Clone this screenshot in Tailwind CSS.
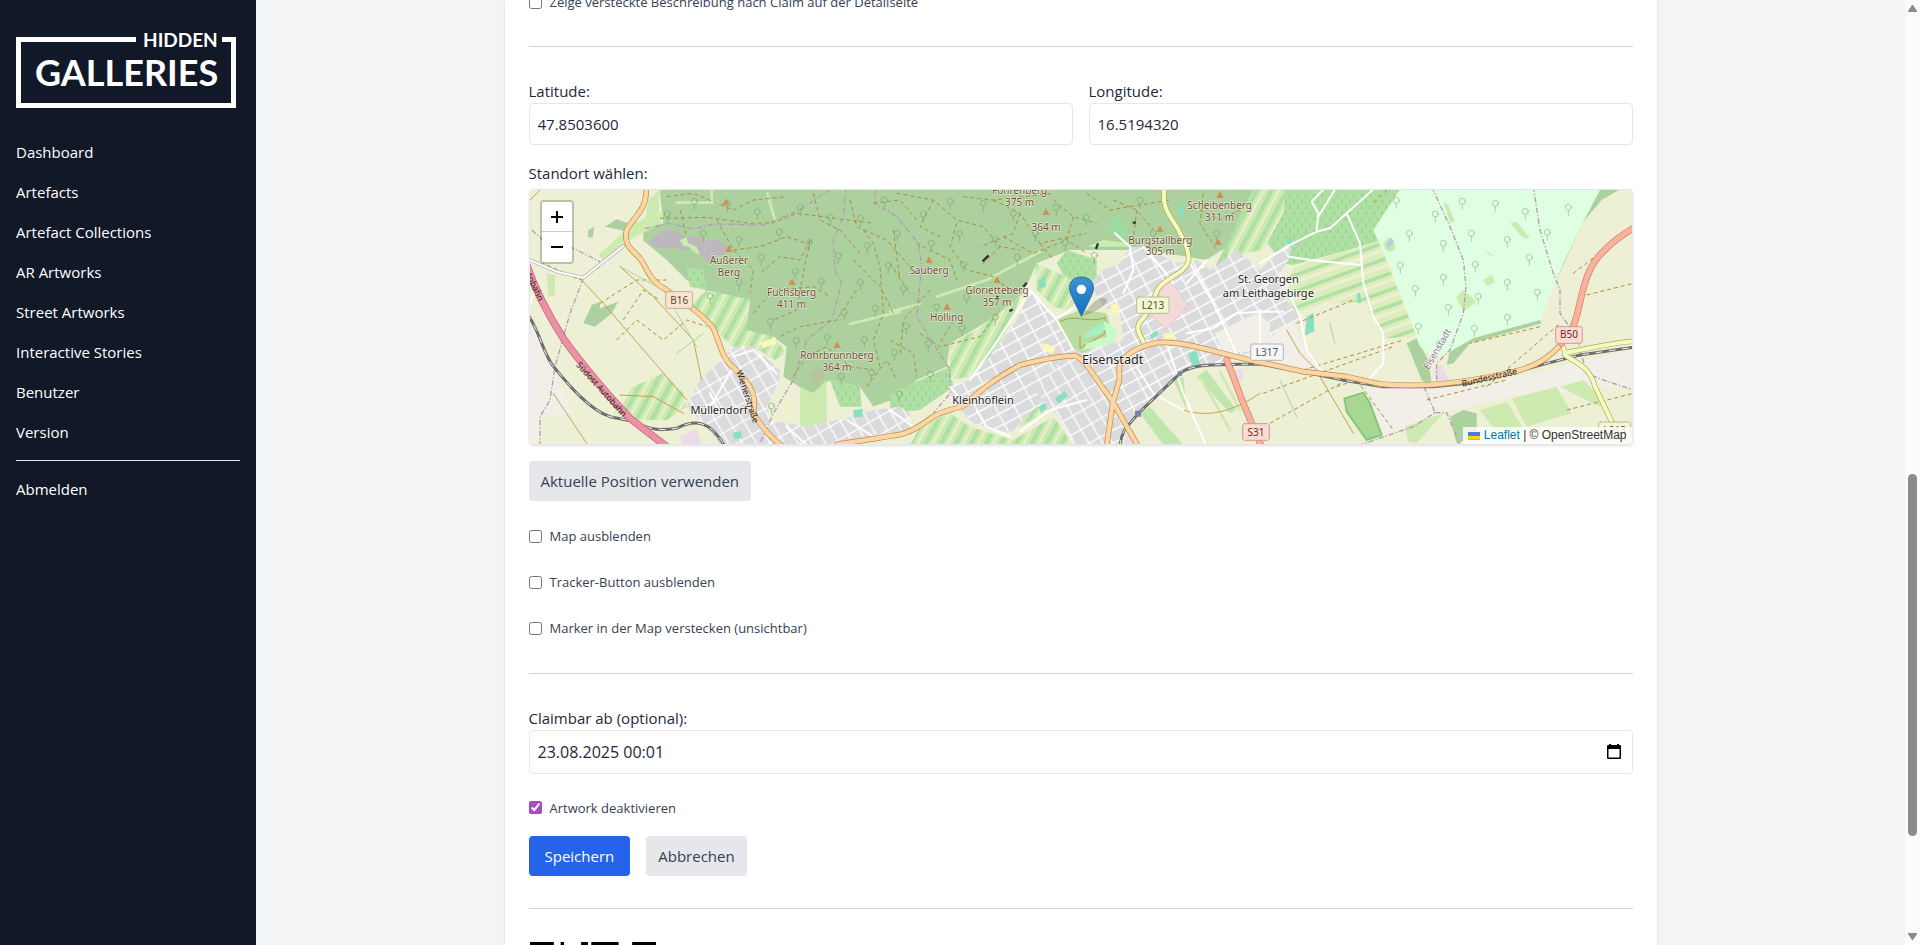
<!DOCTYPE html>
<html lang="de">
<head>
    <meta charset="UTF-8" />
    <meta name="viewport" content="width=device-width, initial-scale=1.0"/>
    <title>Hidden Galleries – Artwork bearbeiten</title>
    <script src="https://cdn.jsdelivr.net/npm/@tailwindcss/browser@4"></script>
</head>
<body class="flex h-screen overflow-hidden bg-gray-100 font-['Open_Sans',sans-serif] text-[15px] leading-6 text-gray-800">

    <!-- Seitenleiste -->
    <aside class="w-64 shrink-0 bg-[#111827] p-4 text-white">
        <a href="#" class="mt-4 mb-8 block" aria-label="Hidden Galleries">
            <svg class="block h-[76px] w-[220px]" viewBox="0 0 220 76" fill="none">
                <path d="M120 7.500H2.500V73.500H217.500V7.500H206" stroke="#fff" stroke-width="5"/>
                <text x="127" y="15" fill="#fff" font-family="Lato, sans-serif" font-weight="700" font-size="19">HIDDEN</text>
                <text x="19" y="54" fill="#fff" font-family="Lato, sans-serif" font-weight="700" font-size="36">GALLERIES</text>
            </svg>
        </a>
        <nav class="flex flex-col gap-4">
            <a href="#">Dashboard</a>
            <a href="#">Artefacts</a>
            <a href="#">Artefact Collections</a>
            <a href="#">AR Artworks</a>
            <a href="#">Street Artworks</a>
            <a href="#">Interactive Stories</a>
            <a href="#">Benutzer</a>
            <a href="#">Version</a>
            <hr class="border-gray-200">
            <a href="#">Abmelden</a>
        </nav>
    </aside>

    <main class="flex min-w-0 flex-1 justify-center overflow-hidden">
        <form class="w-full max-w-6xl shrink-0 bg-white px-6 shadow-sm">
            <div class="-mt-[10px] flex h-6 items-center gap-2 text-[13px] text-gray-700">
                <input type="checkbox" id="show-hidden" class="size-[13px]">
                <label for="show-hidden">Zeige versteckte Beschreibung nach Claim auf der Detailseite</label>
            </div>

            <hr class="my-8 border-gray-300">

            <div class="grid grid-cols-2 gap-4">
                <div>
                    <label for="lat" class="block">Latitude:</label>
                    <input type="text" id="lat" value="47.8503600" class="block h-[42px] w-full rounded border border-gray-200 px-2">
                </div>
                <div>
                    <label for="lng" class="block">Longitude:</label>
                    <input type="text" id="lng" value="16.5194320" class="block h-[42px] w-full rounded border border-gray-200 px-2">
                </div>
            </div>

            <p class="mt-4 mb-1">Standort wählen:</p>
            <div class="relative h-64 overflow-hidden rounded border border-gray-200 shadow">
                <svg class="block size-full" viewBox="30 30 3306 762" preserveAspectRatio="xMidYMid slice" fill="none" stroke-linecap="round" stroke-linejoin="round">
                    <defs>
                        <pattern id="streets-a" width="52" height="34" patternUnits="userSpaceOnUse" patternTransform="rotate(-28)">
                            <rect width="52" height="34" fill="#dbdadc"/><path d="M0 2H52M3 0V34" stroke="#fff" stroke-width="4"/>
                        </pattern>
                        <pattern id="streets-b" width="36" height="48" patternUnits="userSpaceOnUse" patternTransform="rotate(-30)">
                            <rect width="36" height="48" fill="#dbdadc"/><path d="M0 2H36M3 0V48" stroke="#fff" stroke-width="4"/>
                        </pattern>
                        <pattern id="vines" width="40" height="60" patternUnits="userSpaceOnUse" patternTransform="rotate(28)">
                            <rect width="40" height="60" fill="#cdebb0"/><path d="M6 0V60" stroke="#aedfa3" stroke-width="13"/><path d="M25 0V60" stroke="#eef0d5" stroke-width="6"/>
                        </pattern>
                        <pattern id="vines-flat" width="60" height="46" patternUnits="userSpaceOnUse" patternTransform="rotate(-20)">
                            <rect width="60" height="46" fill="#dcedbd"/><path d="M0 6H60" stroke="#aedfa3" stroke-width="10"/><path d="M0 26H60" stroke="#f0efd5" stroke-width="9"/>
                        </pattern>
                        <pattern id="orchard" width="24" height="36" patternUnits="userSpaceOnUse">
                            <rect width="24" height="36" fill="#aedfa3"/><path d="M6 6v8M18 24v8" stroke="#84bd7d" stroke-width="2"/>
                        </pattern>
                        <linearGradient id="pin" x1="0" y1="0" x2="0" y2="1">
                            <stop offset="0" stop-color="#3f93cf"/><stop offset="1" stop-color="#126fc6"/>
                        </linearGradient>
                        <g id="tree"><circle r="9"/><path d="M0 9V24"/></g>
                        <path id="peak" d="M0 -11L11 9H-11Z" fill="#d08f55"/>

                        <path id="motorway" d="M20 255C50 340 85 405 130 475C190 560 260 640 330 715L440 800"/>
                        <path id="trunk" d="M3340 145C3270 185 3225 235 3210 270C3180 330 3180 400 3155 450L3125 490M2120 540L2140 590L2170 670L2225 800"/>
                        <path id="primary" d="M378 20C384 90 340 110 320 150C308 200 345 215 362 238C385 270 385 300 440 330C500 370 555 410 580 445C600 490 608 540 640 562C700 620 710 650 700 700C730 750 760 780 790 800M950 793L1050 778L1110 768C1160 765 1190 745 1240 710C1270 690 1300 690 1335 675C1380 630 1420 600 1500 555C1560 540 1620 528 1665 527C1700 540 1720 590 1775 660L1855 800M1760 800L1778 670L1798 600V560C1805 530 1850 500 1910 488C2000 480 2100 525 2250 553L2350 575L2480 590L2580 612C2680 622 2800 618 2980 575C3050 560 3090 530 3125 490"/>
                        <path id="secondary" d="M1935 20C1920 80 1955 115 1970 140C1990 180 2010 210 2005 245C1990 285 1940 290 1915 325C1900 350 1900 380 1865 420C1840 445 1865 470 1872 490M3340 484C3270 488 3200 508 3135 518L3125 490M3135 525C3170 550 3210 560 3225 620L3275 725L3320 800"/>
                        <path id="rail" d="M20 400C60 450 70 530 105 565C150 620 210 690 270 710L330 722C400 755 430 750 470 745C530 715 570 725 612 795M1800 800C1805 740 1830 735 1855 700L1980 580C2020 550 2080 555 2220 552L2370 580L2480 602L2590 620H2740L2840 610L2980 578L3080 550L3180 525L3340 502"/>
                    </defs>

                    <!-- Flächen -->
                    <path d="M0 0H3360V800H0Z" fill="#eef0d5"/>
                    <path d="M27 410L160 700L60 712L55 800H0V410ZM2180 460L2310 400L2360 520L2400 575L2180 530ZM2540 625L2860 620L3340 510V620L2970 650L2760 700L2560 780L2490 720Z" fill="#f2efe9"/>
                    <path d="M418 20L430 130L370 150V182L440 240L500 300L560 332L690 360L675 450L760 470L800 500L790 590L840 622L880 640L930 600L1020 620L1060 680L1140 650L1190 600L1280 560L1290 490L1360 450L1440 400L1510 340L1550 250L1650 210H1810L1910 215L2060 240L2120 200L2190 120L2260 90L2360 20Z" fill="#add19e"/>
                    <path d="M190 430L215 375L240 365V385L295 365L275 400L225 440ZM255 140L290 118L340 135L312 152ZM205 150L222 140L218 175L203 170ZM2660 490L2690 475L2725 540L2735 615L2705 600ZM2790 510L2860 470L3060 418L3065 430L2850 490L2800 550L2780 555ZM3100 320L3190 125L3245 60L3300 28H3240L3190 110L3125 260ZM2790 710L2830 690L2870 700V770L2810 790Z" fill="#add19e"/>
                    <path d="M235 225L340 130L425 95V130L310 190L250 240ZM385 60L418 30V95L375 125ZM2880 690L2960 665L3010 745L2940 770ZM2975 655L3110 620L3155 700L3020 740ZM2655 740L2770 700L2690 790L2665 785ZM3120 620L3190 600L3260 670L3240 680ZM80 280L105 285V345L85 350Z" fill="#cdebb0"/>
                    <path d="M2473 655L2530 638L2550 670L2585 765L2540 780L2480 695Z" fill="#a7d793" stroke="#84c67a" stroke-width="6"/>
                    <path d="M2645 20L2560 150L2620 280L2700 500L2740 530L2790 515L2860 475L3060 420L3125 260L3190 125L3245 20Z" fill="#dfffe2"/>
                    <path d="M2770 65L2785 75L2805 125L2790 128ZM2970 130L2990 125L3030 175H3010ZM2888 205L2925 230L2910 225ZM2890 300L2915 285L2925 305L2900 318ZM2808 350L2830 330L2870 365L2830 395Z" fill="#cdebb0"/>
                    <path d="M2590 190C2610 160 2620 180 2628 205C2610 225 2592 215 2590 190Z" fill="#cdebb0"/><path d="M2598 195L2612 172L2622 185L2605 208Z" fill="#aad3df"/>
                    <path d="M2205 20H2645L2560 150L2575 185L2320 255L2290 250L2210 150L2120 240L2080 270L2150 130L2200 110Z" fill="url(#orchard)"/>
                    <path d="M2205 20H2300L2290 100L2230 210L2120 230L2150 130Z" fill="url(#vines)"/>
                    <path d="M2320 260L2575 182L2690 470L2590 475L2535 365L2430 370L2325 400L2285 360Z" fill="url(#vines-flat)"/>
                    <path d="M560 330L690 360L680 450L760 470L800 520L765 540L700 500L640 500L560 430L510 380Z" fill="url(#vines)"/>
                    <path d="M500 260L550 270L560 330L510 320ZM930 600L1020 620L1025 680L960 680ZM1200 600L1290 560L1300 620L1200 690L1110 700V640ZM1640 210L1730 240V310L1640 300L1610 250Z" fill="url(#orchard)"/>
                    <path d="M280 700L340 620L430 580L490 640L500 680L440 720H360Z" fill="url(#vines)"/>
                    <path d="M1545 250L1640 290L1700 340L1640 390L1600 380L1550 330ZM1370 450L1500 350L1480 420L1420 520L1350 590L1290 600L1290 490ZM1170 795L1200 740L1290 700L1350 740L1480 780L1600 710L1660 795ZM1480 680L1530 650L1570 700L1500 740Z" fill="url(#vines)"/>
                    <path d="M840 622L880 640L920 600V770L840 740Z" fill="#cdebb0"/>
                    <path d="M2030 590L2060 570L2150 690L2130 700ZM1860 700L1930 795H1990L1890 680ZM1960 600L1990 590L2000 690Z" fill="#c0e6ae"/>
                    <path d="M385 185L430 150L470 152L500 172L520 165L560 182L590 178L625 200L615 225L600 222L580 240L560 245L530 215L510 205L490 212L470 205L410 205Z" fill="#bdb7be"/>
                    <path d="M480 180L500 172L505 190L530 200L540 225L520 215L508 200L490 198Z" fill="#cdebb0"/>
                    <path d="M870 580L900 560L915 590L890 620L870 605Z" fill="#b5c79a"/>
                    <path d="M780 700L800 655L838 670L800 720Z" fill="#f3f0cf"/>

                    <!-- Ortsgebiete -->
                    <path d="M645 500H700L780 570L778 600L740 680L750 720L860 740L950 720L1060 690L1140 680L1170 700V750L1110 775L1000 795H600L560 740L500 680L540 600Z" fill="url(#streets-b)"/>
                    <path d="M1290 620L1350 600L1410 530L1490 420L1530 335L1580 380L1610 420L1650 500L1710 510L1810 480L1800 400L1750 380L1710 310L1750 270L1800 250L1830 200L1870 200L1970 250L2030 240L2070 270L2150 210L2220 270L2280 210L2320 180L2310 230L2280 280L2290 350L2350 420L2280 440L2230 500L2130 540L1980 580L1850 700L1800 795H1660L1610 700L1550 680L1470 760L1360 730L1290 660Z" fill="url(#streets-a)"/>
                    <path d="M1630 530H1670L1780 660L1760 795H1670L1600 690L1550 640Z" fill="url(#streets-b)"/>
                    <path d="M2085 460L2210 400L2250 430V510L2110 520Z" fill="#f2efe9"/>
                    <path d="M1920 330L1950 300L2005 375L1940 448L1895 410Z" fill="#f2dad9" stroke="#e7bcbf" stroke-width="2"/>
                    <path d="M1605 420L1680 390L1760 400L1780 470L1690 520L1650 500Z" fill="#b9dca0"/>
                    <path d="M1620 425C1660 400 1700 430 1750 415M1680 470V505L1755 460V410" stroke="#b39a55" stroke-width="3"/>
                    <path d="M1690 465L1740 430L1765 440L1740 462L1695 475Z" fill="#a9efc4"/>
                    <path d="M1750 420L1790 450L1780 490L1690 510L1700 490L1760 470Z" fill="#c8facc"/>
                    <path d="M1555 300l18-10l6 30l-20 6ZM1605 655l30-22l8 16l-28 22ZM1555 682l18-14l8 18l-18 12ZM2300 182l10-12l12 22l-12 12ZM2360 410l20-12l3 55l-28 14ZM2510 340l10-2l4 30l-10 2ZM1000 690l28-4v24l-26 2ZM640 758l22-6l4 22l-24 4ZM1975 85L1990 70L1992 110L1976 105ZM1890 465l18-14l8 12l-20 14ZM2005 520l24-6l12 40l-24 6Z" fill="#88e0be"/>
                    <path d="M1565 490l24 4l18 14l-10 14l-24-10ZM1770 375l24-6l2 32l-22 4ZM1930 460l30-2v20l-28 2ZM720 490L765 470L770 490L730 505Z" fill="#f9f9b5"/>
                    <path d="M480 770L530 745L545 795H490ZM2740 570L2762 552L2788 600L2755 612ZM2145 570l20-4l6 34l-16 2ZM1820 760l20-10l20 45h-45Z" fill="#ebdbe8"/>
                    <path d="M1750 150L1800 95L1830 170L1790 170Z" fill="#9fdba0"/>
                    <g stroke="#cdebb0" stroke-width="8"><path d="M470 68H590M575 32V66M742 40L765 120M990 432L1140 395M1110 395L1200 372M1250 350L1400 300L1560 215"/><path d="M2040 590L2130 750M2100 575L2160 690"/></g>
                    <path d="M1700 200L1750 180L1830 190L1820 200Z" fill="#cdebb0"/>

                    <!-- Grenzen und Wege -->
                    <g stroke="#b39cb2" stroke-width="4" stroke-dasharray="16 6 4 6" stroke-linecap="butt">
                        <path d="M375 145L450 130L520 148L580 132L730 135L830 95L930 30M978 20L970 110L940 180L945 270L965 310L935 420L860 480L820 600L760 700L720 790M1065 30V70L1130 110L1195 190L1205 260L1190 410L1240 490L1290 570V640L1240 700M35 150L80 190L150 200L240 245M190 295L150 400L105 560L90 660L60 710V800"/>
                        <path d="M2735 20L2790 140L2830 240L2838 320L2830 400L2790 510L2750 550V610M3040 20L3060 150L3100 280L3120 330V400L3170 470L3200 580L3250 600L3340 630M2712 620L2745 698L2680 740L2520 795M2745 698H2780L2820 795"/>
                    </g>
                    <g stroke="#ae8c3e" stroke-width="3" stroke-dasharray="12 9" stroke-linecap="butt">
                        <path d="M420 115L560 112L690 130L760 128L830 100L1060 130M590 120L640 210L700 270L690 340M870 180L840 240L780 230L720 280M870 180L850 280L830 390L760 420M1030 150L1060 190L1080 260L1090 400L1060 480L1080 560M1000 240L1080 320L1120 400M820 590L860 530L920 500L990 560L1060 570M1010 330L950 420L840 440L780 470M1120 150L1140 300M880 40L900 120L960 150L1020 220"/>
                        <path d="M1130 40L1240 60L1310 120L1390 140L1440 200L1500 210M1310 130L1290 200L1340 270L1420 290L1480 340M1190 190L1290 240L1310 300M1420 60L1500 100L1560 190L1700 160M1450 170L1540 220L1640 180M1200 460L1260 500L1380 470L1440 390M1300 420L1260 490M1600 60L1660 110L1730 130M1780 60L1850 90L1900 150M1700 40L1770 90L1950 60M2020 80L2100 120L2160 90M1230 330L1150 420L1140 530M1330 50L1420 60L1600 40"/>
                        <path d="M440 50L520 40L640 90L700 60L800 50M480 90L500 170M640 210L720 200L800 170L860 190M700 400L760 330L880 320L930 350M990 60L1010 140L1100 180L1170 260M1040 620L1100 540L1130 600M1060 70L1140 60L1190 120M1240 60L1200 140L1260 170M1500 100L1480 160L1380 200M1560 190L1600 240M1660 110L1640 180L1700 220M1440 200L1380 260M1110 480L1180 520L1190 590M1110 250L1170 340M1850 90L1840 180M2050 40L2040 130L2090 210"/>
                        <path d="M240 260L180 300L70 250M310 420L370 330L420 360M290 480L350 420L430 480L500 420L560 440M240 370L350 300L440 300M2600 30L2560 70M2330 430L2500 360M2350 570L2650 480M2230 640L2620 500M2250 730L2480 600M3160 280L3340 140M3180 350L3340 310M3060 440L2850 490M2900 620L3120 430M2720 660L2960 600M3140 690L3340 640M2450 620L2510 600L2620 750"/>
                    </g>
                    <g stroke="#c5a24f" stroke-width="3">
                        <path d="M185 300L250 370L500 660M30 60L60 30M300 260L400 350L520 480L545 600M100 640L200 790M300 645L400 650L490 700M1990 690C2080 720 2160 680 2220 640M2300 450L2340 520L2390 570M2400 590L2500 760"/>
                    </g>
                    <g stroke="#a9d6a4" stroke-width="3"><path d="M300 260L430 330L530 500M470 520L550 460M2280 600L2330 710M2430 430L2445 490"/></g>

                    <!-- Nebenstraßen -->
                    <g stroke="#b9b5b5" stroke-width="11"><path d="M20 236L110 275L190 293L310 198"/></g>
                    <g stroke="#fff" stroke-width="6">
                        <path d="M20 236L110 275L190 293L310 198M27 380L40 340"/>
                        <path d="M1350 600L1420 500L1530 335M1530 330L1610 420L1660 510M1610 415L1660 385M1785 160L1830 200L1840 270L1810 340M1870 200L1930 270L1960 310M2060 240L2000 310M2000 460L2080 445L2150 400L2220 395H2290M1870 480L1920 490L1950 500M1940 490L1990 640L2060 800M1850 560L1900 640L1990 690M1500 755L1590 690L1700 660M1370 690L1400 740L1470 770M1340 680L1290 620"/>
                        <path d="M2010 250L2080 370L2150 520M2220 390V500M2220 250L2300 200L2390 155L2430 145L2480 100L2560 28M2480 100L2520 190L2530 310L2560 410L2590 460V550L2545 600M2310 230L2370 240L2520 255M2280 280L2340 410L2360 510L2405 575M2390 150L2395 100L2375 65L2410 28M2395 110L2445 28"/>
                        <path d="M560 700L640 560M600 700L570 640M1110 690L1180 740M800 740L860 795M980 720L1060 770M640 530L700 510L770 580"/>
                    </g>

                    <!-- Hauptstraßen und Bahn -->
                    <use href="#rail" stroke="#6d6d6d" stroke-width="9"/><use href="#rail" stroke="#f3f3f3" stroke-width="3" stroke-dasharray="20 20" stroke-linecap="butt"/>
                    <use href="#secondary" stroke="#a5a958" stroke-width="16"/><use href="#secondary" stroke="#f7fabf" stroke-width="12"/>
                    <use href="#primary" stroke="#bd8a42" stroke-width="17"/><use href="#primary" stroke="#fcd6a4" stroke-width="13"/>
                    <use href="#trunk" stroke="#d07861" stroke-width="20"/><use href="#trunk" stroke="#f9b29c" stroke-width="16"/>
                    <use href="#motorway" stroke="#d5557c" stroke-width="22"/><use href="#motorway" stroke="#e892a2" stroke-width="18"/>
                    <path d="M1845 692h18v18h-18ZM1973 574h13v13h-13Z" fill="#7981b0"/>
                    <path d="M1388 244L1406 226M1728 207L1734 190M1510 320L1520 308M1468 393L1478 389M1838 128h10M1428 358L1434 348" stroke="#333" stroke-width="7" stroke-linecap="butt"/>

                    <g id="forest-trees" stroke="#7ba777" stroke-width="2"></g>
                    <g id="park-trees" stroke="#93b595" stroke-width="2"></g>

                    <!-- Gipfel -->
                    <use href="#peak" x="618" y="66"/><use href="#peak" x="627" y="207"/><use href="#peak" x="816" y="306"/><use href="#peak" x="951" y="495"/>
                    <use href="#peak" x="1227" y="240"/><use href="#peak" x="1281" y="381"/><use href="#peak" x="1431" y="300"/><use href="#peak" x="1578" y="96"/>
                    <use href="#peak" x="1920" y="147"/><use href="#peak" x="2100" y="45"/><use href="#peak" x="2094" y="186"/>

                    <g font-family="'Noto Sans', 'Open Sans', sans-serif" text-anchor="middle" stroke="none">
                        <g font-size="30" fill="#774b32" stroke="#ffffff" stroke-opacity=".65" stroke-width="4" paint-order="stroke">
                            <text x="627" y="252">Äußerer</text><text x="627" y="287">Berg</text>
                            <text x="815" y="349">Fuchsberg</text><text x="815" y="384">411 m</text>
                            <text x="951" y="538">Rohrbrunnberg</text><text x="951" y="573">364 m</text>
                            <text x="1227" y="282">Sauberg</text><text x="1280" y="423">Hölling</text>
                            <text x="1431" y="342">Glorietteberg</text><text x="1431" y="377">357 m</text>
                            <text x="1499" y="43">Föhrenberg</text><text x="1499" y="78">375 m</text>
                            <text x="1578" y="152">364 m</text>
                            <text x="1921" y="191">Burgstallberg</text><text x="1921" y="226">305 m</text>
                            <text x="2099" y="87">Scheibenberg</text><text x="2099" y="122">311 m</text>
                        </g>
                        <g fill="#222" stroke="#fff" stroke-opacity=".8" stroke-width="5" paint-order="stroke">
                            <text x="597" y="701" font-size="33">Müllendorf</text>
                            <text x="1389" y="673" font-size="33">Kleinhöflein</text>
                            <text x="1778" y="553" font-size="38">Eisenstadt</text>
                            <text x="2245" y="309" font-size="33">St. Georgen</text>
                            <text x="2245" y="352" font-size="33">am Leithagebirge</text>
                        </g>
                        <g fill="#222" font-size="26">
                            <text transform="translate(238 634) rotate(48)">Südost Autobahn</text>
                            <text transform="translate(37 325) rotate(65)">tobahn</text>
                            <text transform="translate(674 652) rotate(72)">Wienerstraße</text>
                            <text transform="translate(2910 601) rotate(-13)">Bundesstraße</text>
                        </g>
                        <text transform="translate(2760 512) rotate(-60)" font-size="28" fill="#93759a" stroke="#fff" stroke-opacity=".7" stroke-width="4" paint-order="stroke">Eisenstadt</text>
                    </g>

                    <!-- Straßenschilder -->
                    <g font-family="'Noto Sans', 'Open Sans', sans-serif" font-size="30" text-anchor="middle" stroke-width="3">
                        <rect x="437" y="335" width="81" height="50" rx="6" fill="#f7e5d3" stroke="#cfa98b"/><text x="478" y="371" fill="#6b4423">B16</text>
                        <rect x="1850" y="351" width="97" height="49" rx="6" fill="#f4f5d4" stroke="#b9bd8e"/><text x="1899" y="387" fill="#50521e">L213</text>
                        <rect x="2192" y="492" width="98" height="49" rx="6" fill="#f6f6f6" stroke="#b4b4b4"/><text x="2241" y="527" fill="#555">L317</text>
                        <rect x="2168" y="731" width="80" height="50" rx="6" fill="#f9dcd5" stroke="#d29a90"/><text x="2208" y="767" fill="#6b2b23">S31</text>
                        <rect x="3107" y="440" width="80" height="50" rx="6" fill="#f9dcd5" stroke="#d29a90"/><text x="3147" y="475" fill="#6b2b23">B50</text>
                        <rect x="3236" y="726" width="96" height="49" rx="6" fill="#f4f5d4" stroke="#b9bd8e"/><text x="3284" y="761" fill="#50521e">L213</text>
                    </g>

                    <!-- Marker -->
                    <path d="M1690 408C1710 375 1730 350 1755 355C1775 362 1745 390 1690 408Z" fill="#000" fill-opacity=".18"/>
                    <path d="M1684 408L1657 352C1640 320 1650 292 1684 291C1718 292 1730 320 1712 352Z" fill="url(#pin)" stroke="#2e6c97" stroke-width="3"/>
                    <circle cx="1684" cy="328" r="14" fill="#fff"/>
                </svg>

                <div class="absolute top-[10px] left-[10px] flex flex-col rounded border-2 border-black/20 bg-clip-padding">
                    <button type="button" aria-label="Zoom in" class="flex h-[30px] w-[30px] items-center justify-center rounded-t-xs border-b border-[#ccc] bg-white">
                        <svg class="size-3" viewBox="0 0 12 12" stroke="#000" stroke-width="2"><path d="M0 6H12M6 0V12"/></svg>
                    </button>
                    <button type="button" aria-label="Zoom out" class="flex h-[30px] w-[30px] items-center justify-center rounded-b-xs bg-white">
                        <svg class="size-3" viewBox="0 0 12 12" stroke="#000" stroke-width="2"><path d="M0 6H12"/></svg>
                    </button>
                </div>

                <div class="absolute right-0 bottom-0 flex items-center gap-1 bg-white/80 px-[5px] font-['Liberation_Sans',sans-serif] text-xs leading-[17px] text-[#333]">
                    <svg class="h-2 w-3" viewBox="0 0 12 8"><path fill="#4c7be1" d="M0 0h12v4H0z"/><path fill="#ffd500" d="M0 4h12v3H0z"/><path fill="#e0bc00" d="M0 7h12v1H0z"/></svg>
                    <p><a href="#" class="text-[#0078a8]">Leaflet</a> | © OpenStreetMap</p>
                </div>
            </div>

            <button type="button" class="mt-4 block h-10 rounded bg-gray-200 px-3 text-gray-700">Aktuelle Position verwenden</button>

            <div class="mt-6 flex flex-col gap-6 pb-[2px] text-[13px] leading-[22px] text-gray-700">
                <div class="flex items-center gap-2">
                    <input type="checkbox" id="hide-map" class="size-[13px]">
                    <label for="hide-map">Map ausblenden</label>
                </div>
                <div class="flex items-center gap-2">
                    <input type="checkbox" id="hide-tracker" class="size-[13px]">
                    <label for="hide-tracker">Tracker-Button ausblenden</label>
                </div>
                <div class="flex items-center gap-2">
                    <input type="checkbox" id="hide-marker" class="size-[13px]">
                    <label for="hide-marker">Marker in der Map verstecken (unsichtbar)</label>
                </div>
            </div>

            <hr class="my-8 border-gray-300">

            <label for="claim-from" class="block">Claimbar ab (optional):</label>
            <div class="flex h-11 items-center rounded border border-gray-200 px-2">
                <input type="text" id="claim-from" value="23.08.2025 00:01" class="min-w-0 flex-1 text-base">
                <button type="button" aria-label="Datum wählen" class="px-[3px]">
                    <svg class="block h-4 w-[14px]" viewBox="0 0 14 16"><path fill-rule="evenodd" d="M2 0h2v1h6V0h2v1h1q1 0 1 1v12q0 1-1 1H1q-1 0-1-1V2q0-1 1-1h1zM1.500 5v8.500h11V5z"/></svg>
                </button>
            </div>

            <div class="mt-[22px] flex h-[23px] items-center gap-2 text-[13px] text-gray-700">
                <input type="checkbox" id="deactivate" checked class="size-[13px] accent-[#a84ac0]">
                <label for="deactivate">Artwork deaktivieren</label>
            </div>

            <div class="mt-[17px] flex gap-4">
                <button type="submit" class="h-10 rounded bg-[#2563eb] px-4 text-white">Speichern</button>
                <button type="button" class="h-10 rounded bg-gray-200 px-3 text-gray-700">Abbrechen</button>
            </div>

            <hr class="my-8 border-gray-300">

            <!-- QR-Code -->
            <svg class="block size-32 p-px" viewBox="0 0 37 37">
                <path d="M0 0h7v7H0zM30 0h7v7h-7zM0 30h7v7H0z"/>
                <path fill="#fff" d="M1 1h5v5H1zM31 1h5v5h-5zM1 31h5v5H1z"/>
                <path d="M2 2h3v3H2zM32 2h3v3h-3zM2 32h3v3H2zM9 0h1v2H9zM15 0h2v1h-2zM18 0h8v1h-8zM11 2h3v1h-3zM20 2h4v2h-4zM9 5h2v4H9zM14 6h5v1h-5zM24 5h2v5h-2z"/>
            </svg>
        </form>
    </main>

    <!-- Scrollleiste -->
    <div class="flex w-[15px] shrink-0 flex-col items-center bg-[#fcfcfc] py-[5px]">
        <svg class="h-[7px] w-[9px]" viewBox="0 0 9 7"><path fill="#8b8b8b" d="M4 0h1l4 6v1H0V6z"/></svg>
        <div class="min-h-0 w-full flex-[462]"></div>
        <div class="w-[9px] min-h-0 flex-[362] rounded-full bg-[#8b8b8b]"></div>
        <div class="min-h-0 w-full flex-[97]"></div>
        <svg class="h-[7px] w-[9px]" viewBox="0 0 9 7"><path fill="#8b8b8b" d="M4 7h1l4-6V0H0v1z"/></svg>
    </div>

    <script>
        // Baumsymbole auf der Karte
        const forest = [[523,64],[442,102],[550,160],[622,72],[712,95],[841,82],[931,112],[1021,115],[1093,60],[657,178],[778,156],[868,186],[955,226],[1042,196],[724,232],[826,273],[904,303],[1021,307],[1105,256],[973,397],[1066,385],[751,424],[829,481],[922,471],[1033,478],[1123,517],[1054,577],[964,589],[754,678],[657,307],[571,348],[1132,160],[1291,64],[1210,103],[1318,160],[1390,70],[1480,100],[1609,82],[1699,112],[1546,160],[1636,187],[1426,178],[1330,253],[1492,232],[1234,190],[1151,325],[1250,381],[1340,350],[1159,438],[1327,444],[1225,490],[1231,582],[1138,642],[1426,411],[1861,61],[1900,160],[1723,226],[2090,160]];
        const park = [[2629,61],[2827,64],[2926,70],[3016,94],[3145,82],[2746,102],[2668,160],[2854,160],[3082,157],[2770,190],[2962,178],[3028,232],[2641,256],[2866,253],[2770,292],[2962,307],[2686,325],[3052,337],[2875,349],[2785,382],[2962,412],[2695,439],[2863,445],[2758,490]];
        const draw = (id, points) => {
            document.getElementById(id).innerHTML = points.map(([x, y]) => `<use href="#tree" x="${x}" y="${y}"/>`).join('');
        };
        draw('forest-trees', forest);
        draw('park-trees', park);
    </script>
</body>
</html>
